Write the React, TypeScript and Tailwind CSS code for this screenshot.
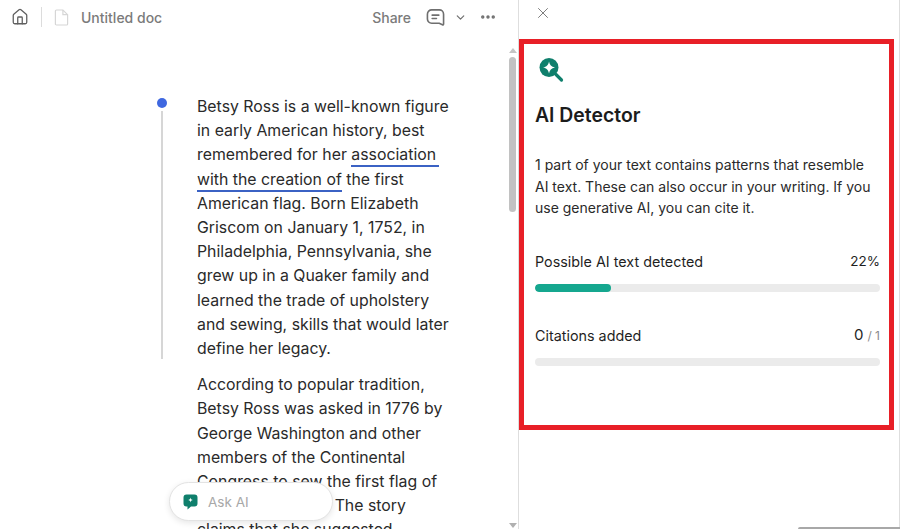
import { ChevronDown, Ellipsis, House, X } from "lucide-react";

const firstParagraph = [
  "Betsy Ross is a well-known figure",
  "in early American history, best",
];

const firstParagraphRest = [
  "American flag. Born Elizabeth",
  "Griscom on January 1, 1752, in",
  "Philadelphia, Pennsylvania, she",
  "grew up in a Quaker family and",
  "learned the trade of upholstery",
  "and sewing, skills that would later",
  "define her legacy.",
];

const secondParagraph = [
  "According to popular tradition,",
  "Betsy Ross was asked in 1776 by",
  "George Washington and other",
  "members of the Continental",
  "Congress to sew the first flag of",
  "the United States. The story",
  "claims that she suggested",
];

function DocIcon() {
  return (
    <svg viewBox="0 0 16 18" className="h-[17px] w-[15px]" fill="none" stroke="#d6d6d6" strokeWidth="1.3">
      <path d="M1.5 2.2c0-.6.5-1.2 1.2-1.2h6.8l5 5v9.8c0 .7-.5 1.2-1.2 1.2H2.7c-.7 0-1.2-.5-1.2-1.2z" />
      <path d="M9.5 1v5h5" />
    </svg>
  );
}

function CommentIcon() {
  return (
    <svg viewBox="0 0 20 20" className="h-[19px] w-[19px]" fill="none" stroke="#6f6f6f" strokeWidth="1.7" strokeLinecap="round">
      <path d="M6 2h8a4.5 4.5 0 0 1 4.5 4.5v10.3c0 .8-.5 1.2-1.2.8L14 16H6a4.5 4.5 0 0 1-4.5-4.5v-5A4.5 4.5 0 0 1 6 2z" />
      <path d="M6.5 7.5h7M6.5 11h4.5" />
    </svg>
  );
}

function DetectorIcon() {
  return (
    <svg viewBox="0 0 26 26" className="ml-[3px] h-[26px] w-[26px]" fill="none">
      <circle cx="11" cy="10.500" r="9.500" fill="#0f7f6c" />
      <path d="M11 4.500c.6 3.600 2.300 5.300 6 6-3.700.7-5.400 2.400-6 6-.6-3.600-2.300-5.300-6-6 3.700-.7 5.400-2.400 6-6z" fill="#fff" />
      <path d="M18 17.500l5.500 5.500" stroke="#0f7f6c" strokeWidth="3.200" strokeLinecap="round" />
    </svg>
  );
}

function AskIcon() {
  return (
    <svg viewBox="0 0 15 16" className="h-4 w-[15px]">
      <path d="M3.5 0.5h8A3 3 0 0 1 14.5 3.500v6a3 3 0 0 1-3 3H8l-3.500 3v-3h-1a3 3 0 0 1-3-3v-6a3 3 0 0 1 3-3z" fill="#0f7f6c" />
      <path d="M7.500 3.500c.2 1.500.9 2.200 2.500 2.500-1.600.3-2.300 1-2.500 2.500-.2-1.500-.9-2.200-2.500-2.500 1.600-.3 2.300-1 2.500-2.500z" fill="#fff" />
    </svg>
  );
}

function Meter({ label, value, total, percent }: { label: string; value: string; total?: string; percent: number }) {
  return (
    <div>
      <div className="flex h-5 items-center justify-between text-[14.35px] text-[#1f1f1f]">
        <span>{label}</span>
        <span className="flex items-baseline">
          <span className={total ? "text-[15px]" : "text-[13.5px]"}>{value}</span>
          {total ? <span className="ml-1 text-xs text-[#8a8a8a]">/ {total}</span> : null}
        </span>
      </div>
      <div className="mt-[12px] h-2 overflow-hidden rounded-full bg-[#ebebeb]">
        <div className="h-full rounded-full bg-[#15a78f]" style={{ width: `${percent}%` }} />
      </div>
    </div>
  );
}

export default function App() {
  return (
    <div className="relative flex h-[529px] w-[900px] overflow-hidden bg-white font-['Inter',sans-serif] text-[#2a2a2a]">
      <section className="relative flex w-[518px] shrink-0 flex-col">
        <header className="flex h-[36px] shrink-0 items-center pb-[2px] pl-[11px] pr-[21px]">
          <House size={18} strokeWidth={1.7} className="text-[#5f5f5f]" />
          <div className="mx-[12px] h-5 w-px bg-[#dcdcdc]" />
          <DocIcon />
          <span className="ml-[12px] text-[14px] font-medium text-[#7b7b7b]">Untitled doc</span>
          <span className="ml-auto text-[14px] font-medium text-[#7b7b7b]">Share</span>
          <div className="ml-[15px]">
            <CommentIcon />
          </div>
          <ChevronDown size={13} strokeWidth={2.2} className="ml-[9px] text-[#6f6f6f]" />
          <Ellipsis size={18} strokeWidth={2.6} className="ml-[12px] text-[#6f6f6f]" />
        </header>

        <div className="flex min-h-0 flex-1">
          <div className="flex-1 overflow-hidden pl-[157px] pt-[58px]">
            <div className="flex gap-[30px]">
              <div className="flex w-[10px] shrink-0 flex-col items-center pt-1">
                <div className="h-[10px] w-[10px] rounded-full bg-[#3f68e0]" />
                <div className="mt-[3px] h-[248px] w-[2px] bg-[#d6d6d6]" />
              </div>
              <div className="whitespace-nowrap pt-[1px] text-[15.85px] leading-[24.2px]">
                {firstParagraph.map((line) => (
                  <div key={line}>{line}</div>
                ))}
                <div>
                  remembered for her{" "}
                  <span className="border-b-2 border-[#3b62c4] pb-[1px] pr-[3px]">association</span>
                </div>
                <div>
                  <span className="border-b-2 border-[#3b62c4] pb-[1px]">with the creation of</span> the first
                </div>
                {firstParagraphRest.map((line) => (
                  <div key={line}>{line}</div>
                ))}
                <div className="mt-[12px]">
                  {secondParagraph.map((line) => (
                    <div key={line}>{line}</div>
                  ))}
                </div>
              </div>
            </div>
          </div>

          <div className="mr-[1px] flex w-[9px] shrink-0 flex-col items-center pt-[12px]">
            <div className="h-0 w-0 border-x-[4px] border-b-[5px] border-x-transparent border-b-[#c4c4c4]" />
            <div className="mt-[4px] h-[155px] w-[7px] rounded-full bg-[#c2c2c2]" />
            <div className="mb-[1px] mt-auto h-0 w-0 border-x-[4px] border-t-[5px] border-x-transparent border-t-[#b0b0b0]" />
          </div>
        </div>

        <div className="absolute left-[169px] top-[482px] flex h-[39px] w-[164px] items-center rounded-full border border-[#e3e3e3] bg-white pl-[13px] shadow-[0_2px_6px_rgba(0,0,0,0.1)]">
          <AskIcon />
          <span className="ml-[10px] pt-[1px] text-[13.5px] text-[#a8a8a8]">Ask AI</span>
        </div>
      </section>

      <aside className="flex min-w-0 flex-1 flex-col border-l border-r border-[#dedede] pr-[2px]">
        <div className="flex h-[39px] shrink-0 items-start pl-[15px] pt-[4px]">
          <X size={18} strokeWidth={1.2} className="text-[#6f6f6f]" />
        </div>
        <div className="h-[391px] w-[375px] shrink-0 border-[5px] border-[#e81f27] pl-[11px] pr-[9px] pt-[13px]">
          <DetectorIcon />
          <h1 className="mt-[19px] text-[19.4px] font-semibold leading-[26px] text-[#1c1c1c]">AI Detector</h1>
          <p className="mt-[26px] text-[14px] leading-[21.500px] text-[#2a2a2a]">
            1 part of your text contains patterns that resemble
            <br />
            AI text. These can also occur in your writing. If you
            <br />
            use generative AI, you can cite it.
          </p>
          <div className="mt-[33px]">
            <Meter label="Possible AI text detected" value="22%" percent={22} />
          </div>
          <div className="mt-[34px]">
            <Meter label="Citations added" value="0" total="1" percent={0} />
          </div>
        </div>
      </aside>
      <div className="absolute bottom-0 right-0 h-[2px] w-[102px] rounded-tl bg-[#a8a8a8]" />
    </div>
  );
}
